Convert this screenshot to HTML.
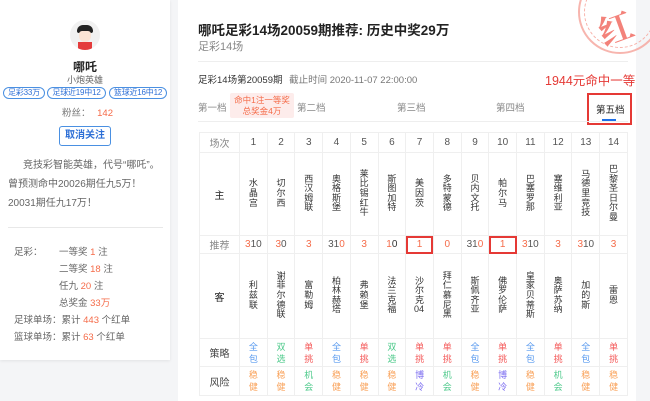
<!DOCTYPE html>
<html><head><meta charset="utf-8"><style>
*{margin:0;padding:0;box-sizing:border-box}
body{width:650px;height:401px;background:#f4f5f7;font-family:"Liberation Sans","Noto Sans CJK SC",sans-serif;color:#333;position:relative;overflow:hidden;font-size:10px}
.a{position:absolute;white-space:nowrap}
.r{color:#f56c4a}
#left{position:absolute;left:0;top:0;width:170px;height:360px;background:#fff;box-shadow:0 1px 3px rgba(0,0,0,.08)}
#right{position:absolute;left:178px;top:0;width:458px;height:401px;background:#fff}
.tag{position:absolute;top:87px;height:12px;border:1px solid #4a90e2;border-radius:7px;color:#2d6fd6;font-size:8px;line-height:10px;text-align:center;white-space:nowrap;overflow:hidden;letter-spacing:-.2px}
table{position:absolute;left:199px;top:132px;border-collapse:collapse;table-layout:fixed;width:429px;font-size:10px}
td{border:1px solid #efefef;text-align:center;vertical-align:middle;color:#555;padding:0}
td.f{width:40px}
.v{display:inline-block;width:10px;line-height:9.6px;word-break:break-all;white-space:normal;color:#333;font-size:9px}
.s{line-height:12px;font-size:9px}
.b{color:#5b9bef}.g{color:#4cc98a}.d{color:#f45a5a}.o{color:#f9a25a}.p{color:#7b6cf0}
.box{outline:2px solid #e53935;outline-offset:-2px}
</style></head><body>
<div id="left">
 <div class="a" style="left:70px;top:20px;width:30px;height:30px;border-radius:50%;background:#f1f1f1;overflow:hidden">
  <div style="position:absolute;left:7px;top:5px;width:16px;height:8px;background:#222;border-radius:6px 6px 2px 2px"></div>
  <div style="position:absolute;left:9px;top:11px;width:12px;height:11px;background:#fbe3d4;border-radius:3px 3px 6px 6px"></div>
  <div style="position:absolute;left:8px;top:22px;width:14px;height:8px;background:#e43c3c"></div>
 </div>
 <div class="a" style="left:0;width:170px;top:58px;text-align:center;font-weight:bold;font-size:12px;color:#222">哪吒</div>
 <div class="a" style="left:0;width:170px;top:73px;text-align:center;font-size:9px;color:#666">小炮英雄</div>
 <div class="tag" style="left:3px;width:42px">足彩33万</div>
 <div class="tag" style="left:47px;width:59px">足球近19中12</div>
 <div class="tag" style="left:109px;width:58px">篮球近16中12</div>
 <div class="a" style="left:62px;top:105px;font-size:9.5px;color:#777">粉丝： <span class="r" style="margin-left:4px">142</span></div>
 <div class="a" style="left:59px;top:126px;width:52px;height:20px;border:1px solid #4a90e2;border-radius:3px;color:#2d6fd6;font-weight:bold;font-size:10px;line-height:18px;text-align:center">取消关注</div>
 <div class="a" style="left:8px;top:156px;width:155px;white-space:normal;font-size:10px;line-height:19px;color:#666;text-indent:15px">竞技彩智能英雄，代号“哪吒”。曾预测命中20026期任九5万！20031期任九17万！</div>
 <div class="a" style="left:8px;top:227px;width:155px;height:1px;background:#e8e8e8"></div>
 <div class="a" style="left:14px;top:244px;line-height:17px;font-size:9.5px;color:#666">足彩：</div>
 <div class="a" style="left:59px;top:244px;line-height:17px;font-size:9.5px;color:#666">一等奖 <span class="r">1</span> 注<br>二等奖 <span class="r">18</span> 注<br>任九 <span class="r">20</span> 注<br>总奖金 <span class="r">33万</span></div>
 <div class="a" style="left:14px;top:312px;line-height:17px;font-size:9.5px;color:#666">足球单场：累计 <span class="r">443</span> 个红单<br>篮球单场：累计 <span class="r">63</span> 个红单</div>
</div>
<div id="right">
 <div class="a" style="left:20px;top:19px;font-weight:bold;font-size:13.5px;color:#222">哪吒足彩14场20059期推荐: 历史中奖29万</div>
 <div class="a" style="left:20px;top:38px;font-size:11px;color:#888">足彩14场</div>
 <div class="a" style="left:20px;top:61px;width:430px;height:1px;background:#eee"></div>
 <div class="a" style="left:20px;top:72px;font-size:9.5px;color:#333">足彩14场第20059期 <span style="color:#777;margin-left:4px">截止时间 2020-11-07 22:00:00</span></div>
 <div class="a" style="left:367px;top:70px;font-size:12.5px;color:#e53935">1944元命中一等</div>
 <div class="a" style="left:20px;top:100px;font-size:9.5px;color:#888">第一档</div>
 <div class="a" style="left:52px;top:93px;width:64px;height:25px;background:#fdeceb;border-radius:2px;color:#f56c4a;font-size:8.5px;line-height:11px;text-align:center;padding-top:2px">命中1注一等奖<br>总奖金4万</div>
 <div class="a" style="left:119px;top:100px;font-size:9.5px;color:#888">第二档</div>
 <div class="a" style="left:219px;top:100px;font-size:9.5px;color:#888">第三档</div>
 <div class="a" style="left:318px;top:100px;font-size:9.5px;color:#888">第四档</div>
 <div class="a" style="left:409px;top:93px;width:45px;height:32px;border:2px solid #e53935"></div>
 <div class="a" style="left:418px;top:102px;font-size:9.5px;color:#222">第五档</div>
 <div class="a" style="left:424px;top:119px;width:14px;height:2px;background:#1d6fe8"></div>
 <div class="a" style="left:20px;top:121px;width:430px;height:1px;background:#eee"></div>
 <div class="a" style="left:400px;top:-30px;width:84px;height:84px;border-radius:50%;border:2px solid #f5a29a;opacity:.8"></div>
 <div class="a" style="left:406px;top:-24px;width:72px;height:72px;border-radius:50%;border:1px dashed #f7b0a8"></div>
 <div class="a" style="left:420px;top:2px;font-size:34px;font-weight:bold;color:#f3827a;transform:rotate(-20deg);font-family:'Noto Serif CJK SC',serif">红</div>
</div>
<table>
<tr style="height:20px"><td class="f" style="color:#888">场次</td><td>1</td><td>2</td><td>3</td><td>4</td><td>5</td><td>6</td><td>7</td><td>8</td><td>9</td><td>10</td><td>11</td><td>12</td><td>13</td><td>14</td></tr>
<tr style="height:83px"><td class="f" style="color:#222">主</td>
<td><span class="v">水晶宫</span></td><td><span class="v">切尔西</span></td><td><span class="v">西汉姆联</span></td><td><span class="v">奥格斯堡</span></td><td><span class="v">莱比锡红牛</span></td><td><span class="v">斯图加特</span></td><td><span class="v">美因茨</span></td><td><span class="v">多特蒙德</span></td><td><span class="v">贝内文托</span></td><td><span class="v">帕尔马</span></td><td><span class="v">巴塞罗那</span></td><td><span class="v">塞维利亚</span></td><td><span class="v">马德里竞技</span></td><td><span class="v">巴黎圣日尔曼</span></td></tr>
<tr style="height:18px;font-size:10px"><td class="f" style="color:#888">推荐</td>
<td><span class="r">3</span>10</td><td><span class="r">3</span>0</td><td class="r">3</td><td>31<span class="r">0</span></td><td class="r">3</td><td class="r">1<span style="color:#333">0</span></td><td class="r box">1</td><td class="r">0</td><td>31<span class="r">0</span></td><td class="r box">1</td><td><span class="r">3</span>10</td><td class="r">3</td><td><span class="r">3</span>10</td><td class="r">3</td></tr>
<tr style="height:85px"><td class="f" style="color:#222">客</td>
<td><span class="v">利兹联</span></td><td><span class="v">谢菲尔德联</span></td><td><span class="v">富勒姆</span></td><td><span class="v">柏林赫塔</span></td><td><span class="v">弗赖堡</span></td><td><span class="v">法兰克福</span></td><td><span class="v">沙尔克<span style="white-space:nowrap;margin-left:-1px">04</span></span></td><td><span class="v">拜仁慕尼黑</span></td><td><span class="v">斯佩齐亚</span></td><td><span class="v">佛罗伦萨</span></td><td><span class="v">皇家贝蒂斯</span></td><td><span class="v">奥萨苏纳</span></td><td><span class="v">加的斯</span></td><td><span class="v">雷恩</span></td></tr>
<tr style="height:28px"><td class="f" style="color:#444">策略</td>
<td class="s b">全<br>包</td><td class="s g">双<br>选</td><td class="s d">单<br>挑</td><td class="s b">全<br>包</td><td class="s d">单<br>挑</td><td class="s g">双<br>选</td><td class="s d">单<br>挑</td><td class="s d">单<br>挑</td><td class="s b">全<br>包</td><td class="s d">单<br>挑</td><td class="s b">全<br>包</td><td class="s d">单<br>挑</td><td class="s b">全<br>包</td><td class="s d">单<br>挑</td></tr>
<tr style="height:29px"><td class="f" style="color:#444">风险</td>
<td class="s o">稳<br>健</td><td class="s o">稳<br>健</td><td class="s g">机<br>会</td><td class="s o">稳<br>健</td><td class="s o">稳<br>健</td><td class="s o">稳<br>健</td><td class="s p">博<br>冷</td><td class="s g">机<br>会</td><td class="s o">稳<br>健</td><td class="s p">博<br>冷</td><td class="s o">稳<br>健</td><td class="s g">机<br>会</td><td class="s o">稳<br>健</td><td class="s o">稳<br>健</td></tr>
</table>
</body></html>
